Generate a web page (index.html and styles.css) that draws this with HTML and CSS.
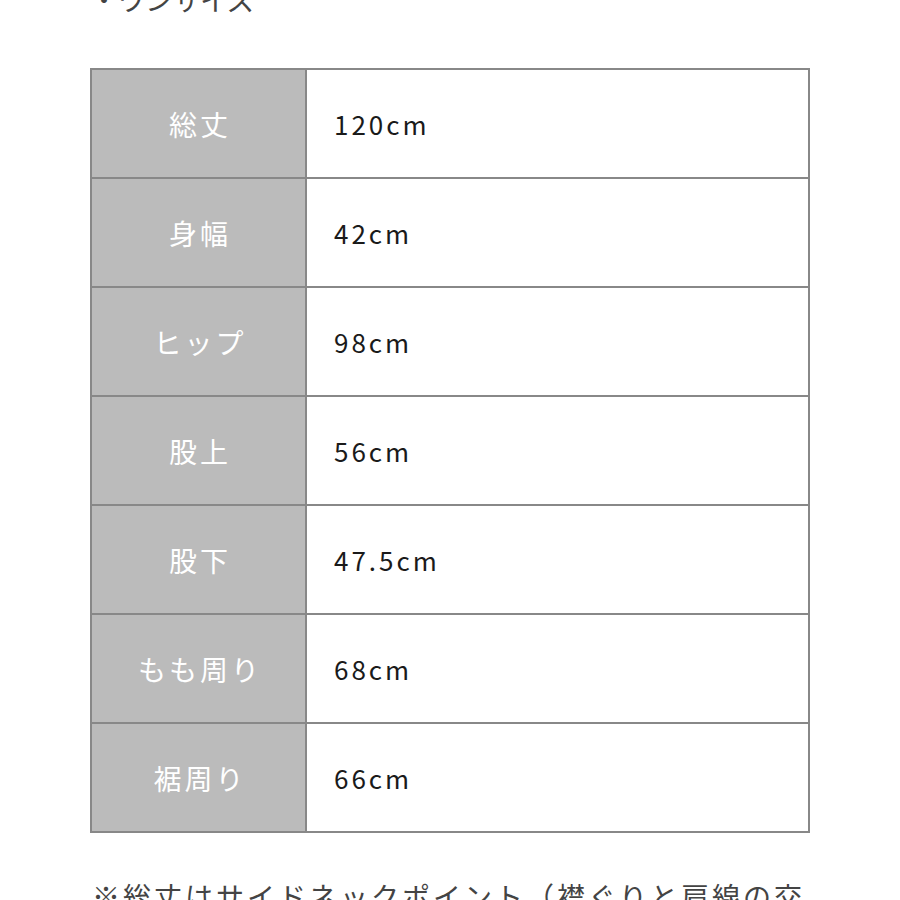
FILE: index.html
```html
<!DOCTYPE html>
<html lang="ja">
<head>
<meta charset="utf-8">
<link rel="stylesheet" href="styles.css">
</head>
<body>
<div class="page">
  <p class="note top">・ワンサイズ</p>
  <table class="size">
    <tr><th>総丈</th><td>120cm</td></tr>
    <tr><th>身幅</th><td>42cm</td></tr>
    <tr><th>ヒップ</th><td>98cm</td></tr>
    <tr><th>股上</th><td>56cm</td></tr>
    <tr><th>股下</th><td>47.5cm</td></tr>
    <tr><th>もも周り</th><td>68cm</td></tr>
    <tr><th>裾周り</th><td>66cm</td></tr>
  </table>
  <p class="note bottom">※総丈はサイドネックポイント（襟ぐりと肩線の交点）から裾までの長さです。</p>
</div>
</body>
</html>
```
FILE: styles.css
```css
html, body {
  margin: 0;
  padding: 0;
  background: #ffffff;
  overflow: hidden;
}
body {
  font-family: "Noto Sans CJK JP", "Noto Sans", sans-serif;
  color: #444;
}
.page {
  padding: 0 90px;
  height: 900px;
  overflow: hidden;
}
.note {
  margin: 0;
  font-size: 28px;
  line-height: 42px;
  color: #444;
}
.note.top {
  margin-top: -22px;
  margin-bottom: 48px;
  white-space: nowrap;
  letter-spacing: -0.5px;
}
.note.bottom {
  margin-top: 42px;
  letter-spacing: 3px;
  padding-left: 2px;
}
.size {
  border-collapse: collapse;
  width: 720px;
  border: 2px solid #888;
}
.size th, .size td {
  border: 2px solid #888;
  height: 107px;
  padding: 0;
  vertical-align: middle;
}
.size th {
  width: 213px;
  background: #bbbbbb;
  color: #ffffff;
  font-weight: normal;
  font-size: 28px;
  letter-spacing: 3px;
  text-indent: 3px;
  text-align: center;
}
.size td {
  background: #fff;
  color: #1a1a1a;
  font-size: 26px;
  letter-spacing: 3px;
  padding-left: 27px;
  text-align: left;
}
```
